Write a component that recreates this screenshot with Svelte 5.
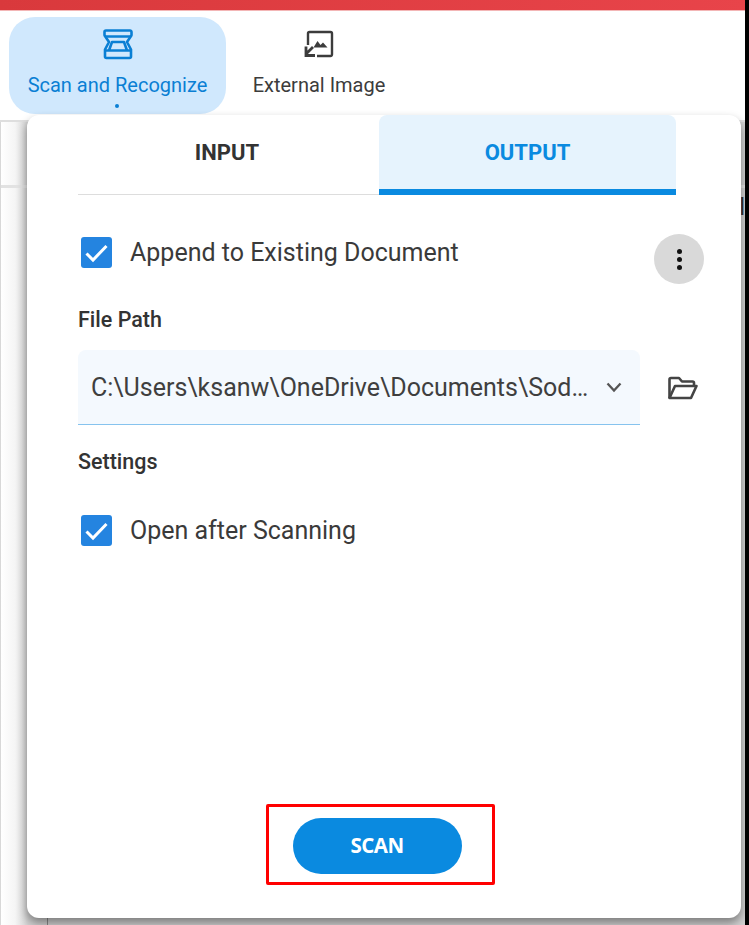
<script>
    let activeTab = 'output';
    let append = true;
    let openAfter = true;
    const filePath = 'C:\\Users\\ksanw\\OneDrive\\Documents\\Sodapdf\\Scanned\\Document.pdf';
</script>

<div class="page">
    <div class="topbar"></div>

    <div class="ribbon">
        <button class="ribbon-btn active">
            <svg width="32" height="32" viewBox="0 0 32 32" fill="none" stroke="currentColor" stroke-width="2.6" stroke-linejoin="round">
                <path d="M4 2.5h24a1.5 1.5 0 0 1 1.5 1.5v3a1.5 1.5 0 0 1-.6 1.2L25 14l4 7.5v7a1.5 1.5 0 0 1-1.5 1.5h-23A1.5 1.5 0 0 1 3 28.500v-7L7 14 3.100 8.200A1.500 1.500 0 0 1 2.500 7V4A1.500 1.500 0 0 1 4 2.500z"/>
                <path d="M3 8.500h26M3 22.500h26M10 14h12l3 8.500H7z"/>
            </svg>
            <span>Scan and Recognize</span>
            <i class="dot"></i>
        </button>
        <button class="ribbon-btn">
            <svg width="32" height="32" viewBox="0 0 32 32" fill="none" stroke="currentColor" stroke-width="2.4">
                <path d="M5 17V5.500A1.500 1.500 0 0 1 6.500 4h21A1.500 1.500 0 0 1 29 5.500v21a1.500 1.500 0 0 1-1.500 1.500H14"/>
                <path d="M10 19l-6.500 6.500M3 18.500v9h9" stroke-width="2.800"/>
                <path d="M10.500 19.500l4-6.500 3 4 2.500-2.500 4.500 5z" fill="currentColor" stroke="none"/>
            </svg>
            <span>External Image</span>
        </button>
    </div>

    <div class="backdrop">
        <div class="strip-line"></div>
        <div class="grid-line"></div>
        <span class="edge-text">l</span>
    </div>
    <div class="edge"></div>

    <section class="panel">
        <div class="tabs">
            <button class="tab" class:on={activeTab === 'input'}>INPUT</button>
            <button class="tab" class:on={activeTab === 'output'}>OUTPUT</button>
        </div>

        <div class="row first">
            <label class="check">
                <input type="checkbox" bind:checked={append} />
                <span class="box">
                    <svg width="31" height="31" viewBox="0 0 31 31" fill="none" stroke="#fff" stroke-width="3"><path d="M5.500 16.500L12 23 25.500 9"/></svg>
                </span>
                Append to Existing Document
            </label>
            <button class="more" aria-label="More">
                <i></i><i></i><i></i>
            </button>
        </div>

        <h4 class="path-title">File Path</h4>
        <div class="path-row">
            <div class="select">
                <span class="value">{filePath}</span>
                <svg width="16" height="11" viewBox="0 0 16 11" fill="none" stroke="#555" stroke-width="2.300"><path d="M1.500 1.500L8 8.500l6.500-7"/></svg>
            </div>
            <button class="browse" aria-label="Browse">
                <svg width="32" height="24" viewBox="0 0 32 24" fill="none" stroke="#444" stroke-width="2.600" stroke-linejoin="round">
                    <path d="M2.500 22V3.500A1.500 1.500 0 0 1 4 2h8l3 3.500h10.500A1.500 1.500 0 0 1 27 7v3"/>
                    <path d="M2.500 22L8 10h21.500L24 22z"/>
                </svg>
            </button>
        </div>

        <h4 class="settings-title">Settings</h4>
        <label class="check second">
            <input type="checkbox" bind:checked={openAfter} />
            <span class="box">
                <svg width="31" height="31" viewBox="0 0 31 31" fill="none" stroke="#fff" stroke-width="3"><path d="M5.500 16.500L12 23 25.500 9"/></svg>
            </span>
            Open after Scanning
        </label>

        <div class="footer">
            <div class="highlight">
                <button class="scan">SCAN</button>
            </div>
        </div>
    </section>
</div>

<style>
    :global(body) {
        margin: 0;
    }

    .page {
        position: relative;
        width: 749px;
        height: 925px;
        overflow: hidden;
        background: #fff;
        font-family: Roboto, "Liberation Sans", sans-serif;
        color: #333;
    }

    button {
        font-family: inherit;
        border: none;
        background: none;
        padding: 0;
    }

    .topbar {
        height: 10px;
        background: linear-gradient(to right, #d9393c, #e8444a);
        border-bottom: 1px solid #f3b6b6;
    }

    .ribbon {
        display: flex;
        height: 111px;
        padding: 6px 0 0 9px;
        box-sizing: border-box;
        border-bottom: 2px solid #dedede;
    }

    .ribbon-btn {
        position: relative;
        display: flex;
        flex-direction: column;
        align-items: center;
        width: 217px;
        height: 97px;
        padding-top: 11px;
        border-radius: 26px;
        font-size: 20px;
        color: #3c3c3c;
    }

    .ribbon-btn + .ribbon-btn {
        width: 186px;
    }

    .ribbon-btn svg {
        display: block;
    }

    .ribbon-btn span {
        margin-top: 13px;
        line-height: 24px;
        white-space: nowrap;
    }

    .ribbon-btn.active {
        background: #d0e8fd;
        color: #0a7fd4;
    }

    .dot {
        position: absolute;
        left: 106px;
        top: 87px;
        width: 4px;
        height: 4px;
        border-radius: 50%;
        background: #0a7fd4;
    }

    .backdrop {
        position: relative;
        height: 803px;
        background: linear-gradient(to right, #fff 0, #f5f5f5 14px, #d0d0d0 27px);
        border-left: 1px solid #d8d8d8;
    }

    .strip-line {
        height: 63px;
        border-bottom: 3px solid #e2e2e2;
    }

    .grid-line {
        position: absolute;
        left: 46px;
        top: 66px;
        bottom: 0;
        width: 1px;
        background: #8a8a8a;
    }

    .edge-text {
        position: absolute;
        right: 4px;
        top: 71px;
        font-size: 24px;
        color: #333;
    }

    .edge {
        position: absolute;
        right: 0;
        top: 0;
        bottom: 0;
        width: 4px;
        background: #000;
    }

    .panel {
        position: absolute;
        left: 27px;
        top: 115px;
        width: 714px;
        height: 803px;
        box-sizing: border-box;
        padding: 0 37px 0 51px;
        background: #fff;
        border-radius: 12px;
        box-shadow: 0 5px 10px rgba(0, 0, 0, 0.4);
        display: flex;
        flex-direction: column;
    }

    .tabs {
        display: flex;
        width: 598px;
        height: 80px;
    }

    .tab {
        width: 301px;
        height: 80px;
        box-sizing: border-box;
        padding: 0 3px 5px 0;
        border-bottom: 1px solid #ddd;
        font-size: 22px;
        font-weight: 700;
        color: #333;
    }

    .tab.on {
        width: 297px;
        padding: 0;
        background: #e6f3fd;
        color: #0a8ae0;
        border-bottom: 6px solid #0a8ae0;
        border-radius: 8px 8px 0 0;
    }

    .row {
        display: flex;
        align-items: center;
        justify-content: space-between;
    }

    .row.first {
        margin-top: 39px;
        height: 50px;
    }

    .row.first .check {
        align-self: flex-start;
        margin-top: 3px;
    }

    .check {
        display: flex;
        align-items: center;
        gap: 18px;
        padding-left: 3px;
        font-size: 25px;
        color: #3a3a3a;
    }

    .check input {
        display: none;
    }

    .box {
        display: flex;
        width: 31px;
        height: 31px;
        border-radius: 3px;
        background: #2484e0;
    }

    .more {
        display: flex;
        flex-direction: column;
        align-items: center;
        justify-content: center;
        gap: 3px;
        width: 50px;
        height: 50px;
        border-radius: 50%;
        background: #d9d9d9;
    }

    .more i {
        width: 5px;
        height: 5px;
        border-radius: 50%;
        background: #111;
    }

    h4 {
        margin: 0;
        font-size: 21.500px;
        font-weight: 500;
        line-height: 26px;
        color: #333;
    }

    .path-title {
        margin-top: 23px;
    }

    .path-row {
        display: flex;
        align-items: center;
        margin-top: 17px;
    }

    .select {
        display: flex;
        align-items: center;
        gap: 14px;
        width: 562px;
        height: 75px;
        box-sizing: border-box;
        padding: 0 18px 0 13px;
        background: #f4f9fe;
        border-bottom: 1px solid #86c3ee;
        border-radius: 8px 8px 0 0;
        font-size: 25px;
        color: #3f3f3f;
    }

    .value {
        flex: 1;
        min-width: 0;
        overflow: hidden;
        white-space: nowrap;
        text-overflow: ellipsis;
    }

    .browse {
        display: flex;
        margin-left: 27px;
    }

    .settings-title {
        margin-top: 24px;
    }

    .check.second {
        margin-top: 40px;
    }

    .footer {
        margin-top: auto;
        display: flex;
        justify-content: center;
        padding-bottom: 33px;
    }

    .highlight {
        display: flex;
        align-items: center;
        justify-content: center;
        width: 229px;
        height: 81px;
        box-sizing: border-box;
        border: 3px solid #f00;
        border-radius: 2px;
        margin-left: -21px;
        padding: 2px 7px 0 0;
    }

    .scan {
        width: 169px;
        height: 56px;
        padding-bottom: 2px;
        border-radius: 28px;
        background: #0a8ae0;
        color: #fff;
        font-size: 20.500px;
        font-weight: 700;
        font-family: "Open Sans", sans-serif;
        letter-spacing: -0.5px;
    }
</style>
